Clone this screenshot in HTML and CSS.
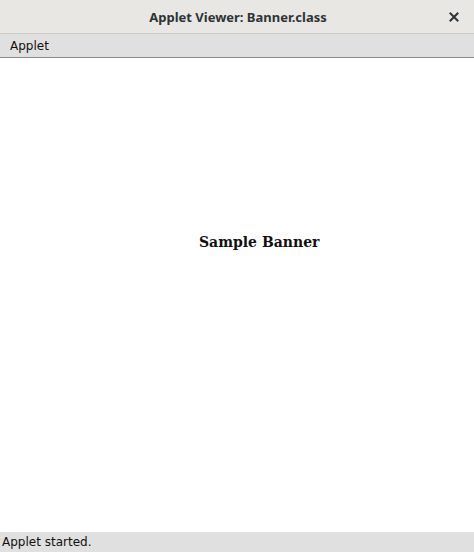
FILE: index.html
```html
<!DOCTYPE html>
<html>
<head>
<meta charset="utf-8">
<link rel="stylesheet" href="styles.css">
</head>
<body>
<div class="window">
  <header class="titlebar">
    <span class="title">Applet Viewer: Banner.class</span>
    <span class="close" aria-label="Close">
      <svg width="10" height="10" viewBox="0 0 10 10"><path d="M1.5 1.5 L8.5 8.5 M8.5 1.5 L1.5 8.5" stroke="#2e3436" stroke-width="2" stroke-linecap="square"/></svg>
    </span>
  </header>
  <nav class="menubar"><span class="menu">Applet</span></nav>
  <main class="canvas"><span class="banner">Sample Banner</span></main>
  <footer class="status">Applet started.</footer>
</div>
</body>
</html>
```
FILE: styles.css
```css
html, body { margin: 0; padding: 0; }
body { width: 474px; height: 552px; overflow: hidden; background: #fff; }
.window { display: flex; flex-direction: column; height: 552px; }
.titlebar {
  height: 34px; box-sizing: border-box;
  background: #e8e7e4; border-bottom: 1px solid #d0cdc8;
  display: flex; align-items: center; justify-content: center; position: relative;
}
.title { font-family: "Noto Sans", "DejaVu Sans", sans-serif; font-weight: bold; font-size: 13px; color: #2e3436; padding-left: 2px; }
.close { position: absolute; right: 15px; top: 12px; width: 10px; height: 10px; display: flex; }
.menubar {
  height: 24px; box-sizing: border-box;
  background: #e0e0e0; border-bottom: 1px solid #8a8a8a;
  display: flex; align-items: center; padding-left: 10px;
}
.menu, .status { font-family: "DejaVu Sans", sans-serif; font-size: 12px; color: #111; }
.canvas { flex: 1; position: relative; background: #fff; }
.banner {
  position: absolute; left: 199px; top: 176px;
  font-family: "DejaVu Serif", serif; font-size: 14px; font-weight: bold; color: #111;
}
.status { height: 20px; background: #e0e0e0; display: flex; align-items: center; padding-left: 2px; }
```
